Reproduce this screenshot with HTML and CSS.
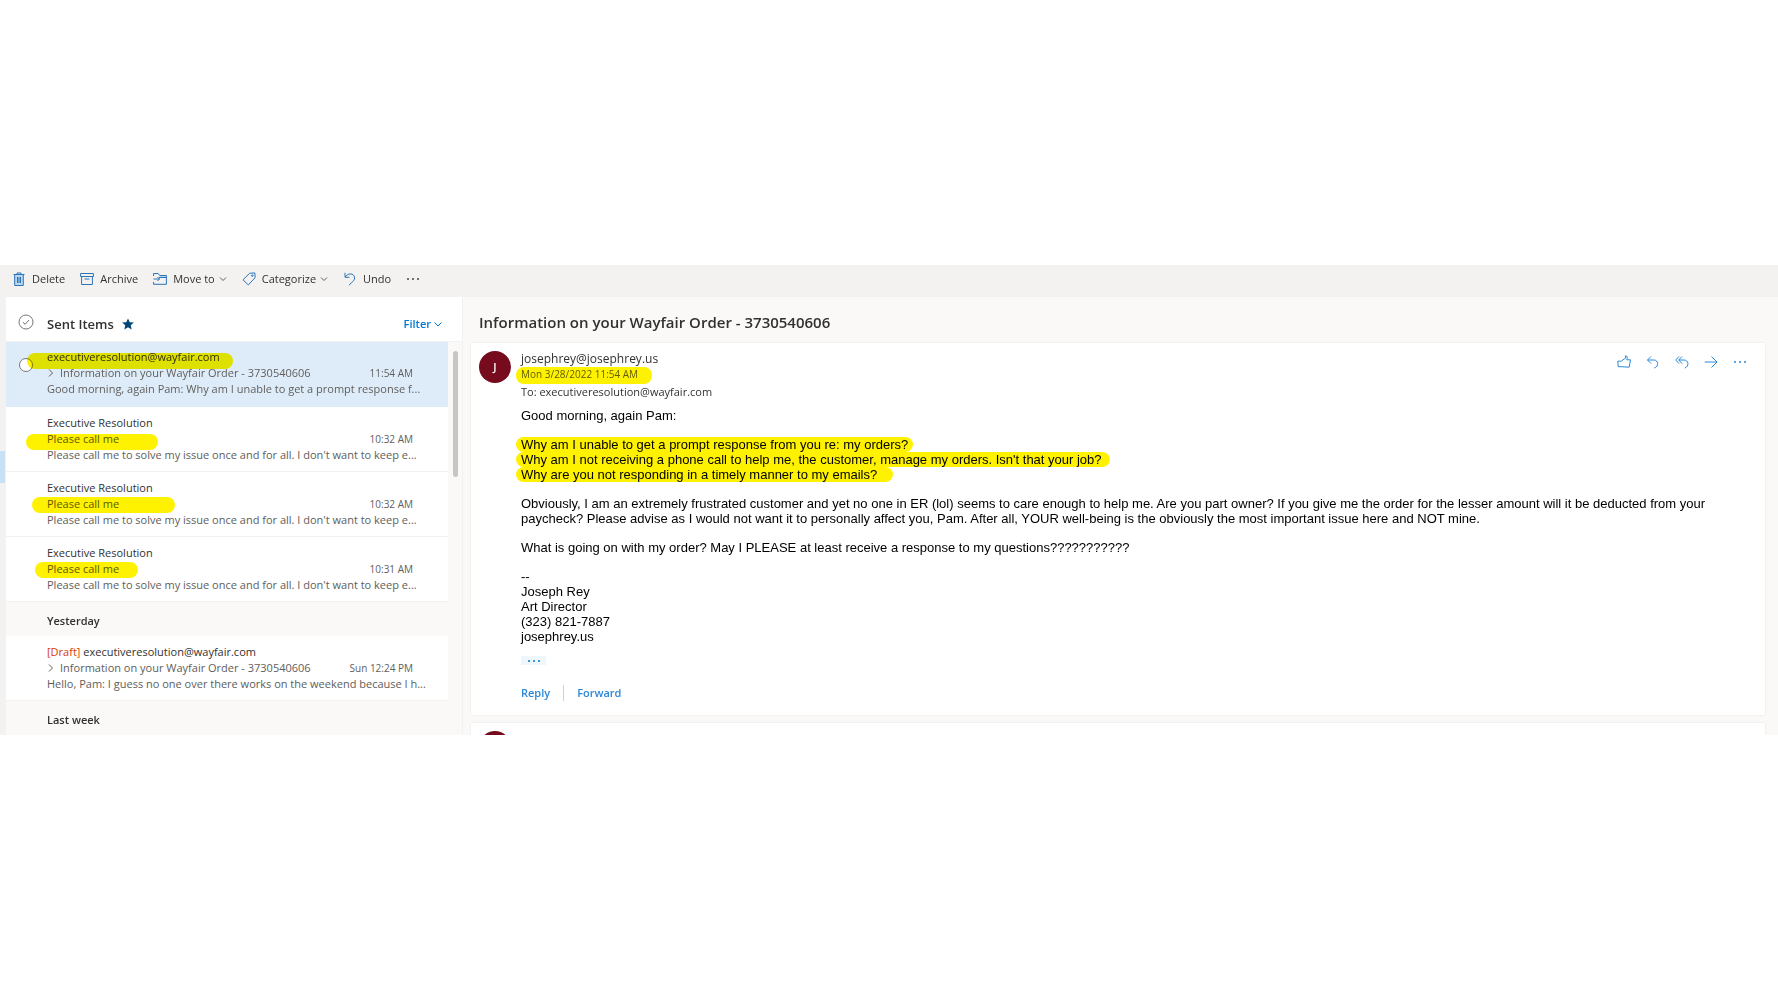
FILE: index.html
```html
<!DOCTYPE html>
<html lang="en">
<head>
    <meta charset="UTF-8">
    <meta name="viewport" content="width=device-width, initial-scale=1.0">
    <title>Mail - Sent Items</title>
    <link rel="stylesheet" href="styles.css">
</head>
<body>

    <div class="app">
        <!-- Command bar -->
        <div class="toolbar">
            <button type="button" class="command">
                <svg width="14" height="14" viewBox="0 0 14 14"><path class="tint" d="M3 3h8v10H3z"/><path d="M1.500 2.500h11M5 2.500V1h4v1.500M2.700 2.500v11h8.600v-11M5.500 5v6M7 5v6M8.500 5v6"/></svg>
                Delete
            </button>
            <button type="button" class="command">
                <svg width="14" height="14" viewBox="0 0 14 14"><path d="M.6 1.500h12.800v3H.6zM1.600 4.500v8h10.800v-8M4.500 7h5"/></svg>
                Archive
            </button>
            <button type="button" class="command">
                <svg width="14" height="14" viewBox="0 0 14 14"><path class="tint" d="M7 3.500h6v2H6z"/><path d="M.6 4V1.500h4.600l1.500 2h6.700v8.800H.6V10M6 5.500h7M.5 7h6M4.500 5l2 2-2 2"/></svg>
                Move to
                <svg class="chevron" width="8" height="8" viewBox="0 0 8 8"><path d="M1 2.500l3 3 3-3"/></svg>
            </button>
            <button type="button" class="command">
                <svg width="14" height="14" viewBox="0 0 14 14"><path d="M1 7.800L7.600 1.300l5.200-.4.300 4.800L6.300 12.900z"/><circle cx="10.300" cy="3.600" r=".8"/></svg>
                Categorize
                <svg class="chevron" width="8" height="8" viewBox="0 0 8 8"><path d="M1 2.500l3 3 3-3"/></svg>
            </button>
            <button type="button" class="command">
                <svg width="14" height="14" viewBox="0 0 14 14"><path d="M2 .8v4.500h4.500M2.200 5C4 2.500 6.500 1.300 9 2.200c2.800 1 3.400 4.400 1.500 6.600L6 13.200"/></svg>
                Undo
            </button>
            <button type="button" class="command more" aria-label="More commands">
                <svg width="14" height="14" viewBox="0 0 14 14"><circle cx="2" cy="7" r="1"/><circle cx="7" cy="7" r="1"/><circle cx="12" cy="7" r="1"/></svg>
            </button>
        </div>

        <div class="panes">
            <div class="rail"><div class="rail-item"></div></div>

            <!-- Message list -->
            <div class="list-pane">
                <div class="list-header">
                    <button type="button" class="select-all" aria-label="Select all">
                        <svg width="16" height="16" viewBox="0 0 16 16"><circle cx="8" cy="8" r="7"/><path d="M5 8.200l2.200 2.100L11 6"/></svg>
                    </button>
                    <h2>Sent Items</h2>
                    <svg class="star" width="12" height="12" viewBox="0 0 12 12"><path d="M6 .4l1.700 3.800 4.200.4-3.200 2.700 1 4.200L6 9.300l-3.700 2.200 1-4.200L.1 4.600l4.200-.4z"/></svg>
                    <button type="button" class="filter">
                        Filter
                        <svg width="8" height="8" viewBox="0 0 8 8"><path d="M.5 2.500L4 6l3.500-3.500"/></svg>
                    </button>
                </div>

                <div class="list-body">
                    <div class="messages">
                        <div class="message selected">
                            <input type="radio" class="pick" aria-label="Select message" checked>
                            <div class="from">executiveresolution@wayfair.com</div>
                            <div class="subject">
                                <svg width="8" height="10" viewBox="0 0 8 10"><path d="M2 1.500L5.500 5 2 8.500"/></svg>
                                <span>Information on your Wayfair Order - 3730540606</span>
                                <time>11:54 AM</time>
                            </div>
                            <div class="preview">Good morning, again Pam: Why am I unable to get a prompt response f...</div>
                            <div class="marker marker-from"></div>
                        </div>
                        <div class="message">
                            <div class="from">Executive Resolution</div>
                            <div class="subject"><span>Please call me</span><time>10:32 AM</time></div>
                            <div class="preview">Please call me to solve my issue once and for all. I don't want to keep e...</div>
                            <div class="marker marker-first"></div>
                        </div>
                        <div class="message">
                            <div class="from">Executive Resolution</div>
                            <div class="subject"><span>Please call me</span><time>10:32 AM</time></div>
                            <div class="preview">Please call me to solve my issue once and for all. I don't want to keep e...</div>
                            <div class="marker marker-second"></div>
                        </div>
                        <div class="message">
                            <div class="from">Executive Resolution</div>
                            <div class="subject"><span>Please call me</span><time>10:31 AM</time></div>
                            <div class="preview">Please call me to solve my issue once and for all. I don't want to keep e...</div>
                            <div class="marker marker-third"></div>
                        </div>
                        <h3>Yesterday</h3>
                        <div class="message">
                            <div class="from"><span class="draft">[Draft]</span> executiveresolution@wayfair.com</div>
                            <div class="subject">
                                <svg width="8" height="10" viewBox="0 0 8 10"><path d="M2 1.500L5.500 5 2 8.500"/></svg>
                                <span>Information on your Wayfair Order - 3730540606</span>
                                <time>Sun 12:24 PM</time>
                            </div>
                            <div class="preview">Hello, Pam: I guess no one over there works on the weekend because I h...</div>
                        </div>
                        <h3>Last week</h3>
                    </div>
                    <div class="scrollbar"><div class="thumb"></div></div>
                </div>
            </div>

            <!-- Reading pane -->
            <div class="reading-pane">
                <h1>Information on your Wayfair Order - 3730540606</h1>

                <div class="card">
                    <div class="avatar">J</div>
                    <div class="mail">
                        <div class="mail-header">
                            <div>
                                <div class="sender">josephrey@josephrey.us</div>
                                <div class="date"><span class="ink ink-date">Mon 3/28/2022 11:54 AM</span></div>
                                <div class="to">To: executiveresolution@wayfair.com</div>
                            </div>
                            <div class="actions">
                                <button type="button" aria-label="Like"><svg width="14" height="14" viewBox="0 0 14 14"><path d="M.8 6.200h3.400L8.500 3V.8c1.700-.2 2.200 1.300 1.300 4h3.700l-1.300 7.400-7.500-.5H1.200z"/></svg></button>
                                <button type="button" aria-label="Reply"><svg width="14" height="14" viewBox="0 0 14 14"><path d="M5 1.500L1.500 5 5 8.500M1.500 5H8c4.500 0 5 6.500.3 8"/></svg></button>
                                <button type="button" aria-label="Reply all"><svg width="14" height="14" viewBox="0 0 14 14"><path d="M4 1.500L.7 5 4 8.500M7 1.500L3.700 5 7 8.500M3.700 5H9c4.800 0 5.300 6.500.8 8"/></svg></button>
                                <button type="button" aria-label="Forward"><svg width="14" height="14" viewBox="0 0 14 14"><path d="M.7 7h12M7.500 1.500L13 7l-5.500 5.500"/></svg></button>
                                <button type="button" class="dots" aria-label="More actions"><svg width="14" height="14" viewBox="0 0 14 14"><circle cx="2" cy="7" r="1"/><circle cx="7" cy="7" r="1"/><circle cx="12" cy="7" r="1"/></svg></button>
                            </div>
                        </div>

                        <div class="mail-body">
                            <p>Good morning, again Pam:</p>
                            <p>
                                <span class="ink">Why am I unable to get a prompt response from you re: my orders?</span><br>
                                <span class="ink ink-wide">Why am I not receiving a phone call to help me, the customer, manage my orders. Isn't that your job?</span><br>
                                <span class="ink ink-long">Why are you not responding in a timely manner to my emails?</span>
                            </p>
                            <p>Obviously, I am an extremely frustrated customer and yet no one in ER (lol) seems to care enough to help me. Are you part owner? If you give me the order for the lesser amount will it be deducted from your paycheck? Please advise as I would not want it to personally affect you, Pam. After all, YOUR well-being is the obviously the most important issue here and NOT mine.</p>
                            <p>What is going on with my order? May I PLEASE at least receive a response to my questions???????????</p>
                            <p>--<br>Joseph Rey<br>Art Director<br>(323) 821-7887<br>josephrey.us</p>
                        </div>

                        <button type="button" class="expand" aria-label="Show message history">
                            <svg width="14" height="8" viewBox="0 0 14 8"><circle cx="2" cy="4" r="1"/><circle cx="7" cy="4" r="1"/><circle cx="12" cy="4" r="1"/></svg>
                        </button>

                        <div class="respond">
                            <button type="button">Reply</button>
                            <button type="button">Forward</button>
                        </div>
                    </div>
                </div>

                <div class="card">
                    <div class="avatar"></div>
                </div>
            </div>
        </div>
    </div>

</body>
</html>
```
FILE: styles.css
```css
* {
    box-sizing: border-box;
}
body {
    margin: 0;
    min-height: 100vh;
    display: flex;
    flex-direction: column;
    justify-content: center;
    background-color: #fff;
    color: #323130;
    font-family: "Open Sans", "Noto Sans", sans-serif;
    font-size: 11px;
    line-height: 16px;
}
h1, h2, h3, p {
    margin: 0;
    font-weight: 600;
}
button {
    display: flex;
    align-items: center;
    padding: 0;
    border: none;
    background: none;
    color: inherit;
    font: inherit;
    cursor: pointer;
}
svg {
    flex: none;
    fill: none;
    stroke: currentColor;
}
.app {
    height: 47vh;
    display: flex;
    flex-direction: column;
    overflow: hidden;
    background-color: #faf9f8;
}

/* Command bar */
.toolbar {
    flex: none;
    height: 32px;
    padding: 0 12px 4px;
    display: flex;
    align-items: center;
    gap: 15px;
    background-color: #f3f2f1;
}
.command {
    gap: 6px;
}
.command svg {
    color: #2b74b8;
}
.command .chevron {
    margin-left: -2px;
    color: #605e5c;
}
.tint {
    fill: #b9d8f2;
    stroke: none;
}
.more svg {
    fill: #484644;
    stroke: none;
}

.panes {
    flex: 1;
    min-height: 0;
    display: flex;
}
.rail {
    flex: none;
    width: 6px;
    padding-top: 154px;
    background-color: #f3f2f1;
}
.rail-item {
    width: 5px;
    height: 32px;
    background-color: #c7e0f4;
}

/* Message list */
.list-pane {
    flex: none;
    width: 456px;
}
.list-header {
    height: 45px;
    padding: 10px 20px 0 12px;
    display: flex;
    align-items: center;
    background-color: #fff;
    border-bottom: 1px solid #f3f2f1;
}
.list-header h2 {
    margin: 0 8px 0 13px;
    font-size: 13px;
}
.select-all {
    color: #797775;
    padding-bottom: 4px;
}
.star {
    fill: #004578;
    stroke: none;
}
.filter {
    gap: 3px;
    margin-left: auto;
    color: #0078d4;
    font-weight: 600;
}
.list-body {
    display: flex;
}
.messages {
    flex: 1;
    min-width: 0;
}
.message {
    position: relative;
    height: 65px;
    padding: 8px 35px 0 41px;
    background-color: #fff;
    border-bottom: 1px solid #f3f2f1;
    color: #605e5c;
    white-space: nowrap;
}
.message.selected {
    padding-top: 7px;
    background-color: #deecf9;
    border-color: #deecf9;
}
.from {
    color: #323130;
}
.draft {
    color: #d83b01;
}
.subject {
    display: flex;
    align-items: center;
}
.subject svg {
    margin-right: 5px;
}
.subject time {
    margin-left: auto;
    font-size: 10px;
}
.pick {
    position: absolute;
    left: 13px;
    top: 16px;
    width: 14px;
    height: 14px;
    margin: 0;
    appearance: none;
    background-color: #fff;
    border: 1px solid #797775;
    border-radius: 50%;
}
h3 {
    height: 34px;
    padding-left: 41px;
    font-size: 11px;
    line-height: 37px;
}
.scrollbar {
    width: 14px;
    padding: 9px 0 0 5px;
}
.thumb {
    width: 5px;
    height: 126px;
    border-radius: 3px;
    background-color: #c8c6c4;
}

/* Highlighter strokes drawn over the list */
.marker {
    position: absolute;
    height: 16px;
    border-radius: 8px;
    background-color: #fff200;
    mix-blend-mode: multiply;
}
.marker-from {
    left: 21px;
    top: 11px;
    width: 206px;
}
.marker-first {
    left: 20px;
    top: 27px;
    width: 132px;
}
.marker-second {
    left: 26px;
    top: 25px;
    width: 143px;
}
.marker-third {
    left: 29px;
    top: 25px;
    width: 103px;
}

/* Reading pane */
.reading-pane {
    flex: 1;
    min-width: 0;
    padding: 0 13px 0 8px;
    border-left: 1px solid #f3f2f1;
}
h1 {
    padding: 14px 8px 10px;
    font-size: 15px;
    line-height: 22px;
}
.card {
    display: flex;
    gap: 10px;
    margin-bottom: 8px;
    padding: 8px 18px 14px 8px;
    background-color: #fff;
    box-shadow: 0 0 2px rgba(0, 0, 0, 0.1);
}
.avatar {
    flex: none;
    width: 32px;
    height: 32px;
    border-radius: 50%;
    background-color: #750b1c;
    color: #fff;
    font-weight: 600;
    line-height: 32px;
    text-align: center;
}
.mail {
    flex: 1;
    min-width: 0;
}
.mail-header {
    display: flex;
    justify-content: space-between;
}
.sender {
    font-size: 12px;
    line-height: 15px;
}
.date {
    font-size: 10px;
}
.to {
    margin-top: 2px;
}
.actions {
    display: flex;
    gap: 15px;
    height: 22px;
    color: #2b88d8;
}
.dots svg, .expand svg {
    fill: currentColor;
    stroke: none;
}
.mail-body {
    display: flex;
    flex-direction: column;
    gap: 14px;
    padding: 8px 24px 0 0;
    color: #000;
    font-family: "Liberation Sans", Arial, sans-serif;
    font-size: 13px;
    line-height: 15px;
}
.mail-body p {
    font-weight: 400;
}
.ink {
    margin-left: -5px;
    padding: 0 5px;
    border-radius: 8px;
    background-color: #fff200;
}
.ink-wide {
    padding-right: 8px;
}
.ink-long {
    padding-right: 16px;
}
.ink-date {
    padding: 0 14px 3px 5px;
    color: #605e00;
}
.expand {
    justify-content: center;
    width: 25px;
    height: 9px;
    margin-top: 12px;
    background-color: #eff6fc;
    color: #0078d4;
}
.respond {
    display: flex;
    margin-top: 20px;
    color: #2b88d8;
    font-weight: 600;
}
.respond button + button {
    margin-left: 13px;
    padding-left: 13px;
    border-left: 1px solid #d2d0ce;
}
```
